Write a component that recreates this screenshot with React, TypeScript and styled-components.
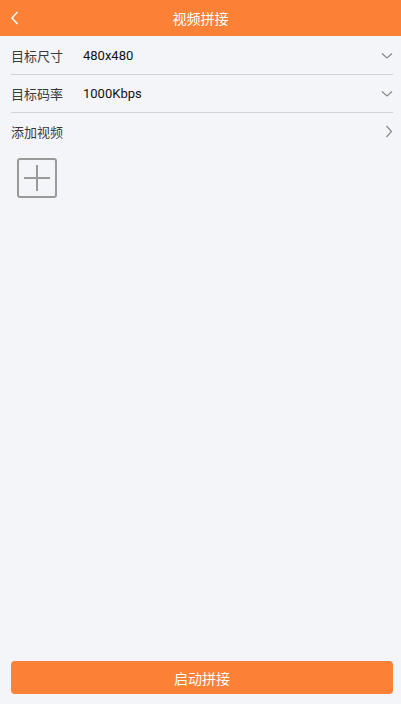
import React from 'react'
import styled, { createGlobalStyle } from 'styled-components'

const GlobalStyle = createGlobalStyle`
  html, body {
    margin: 0;
    padding: 0;
    background: #f4f5f9;
    font-family: Roboto, "Noto Sans CJK SC", sans-serif;
  }
  #root {
    height: 704px;
  }
`

const Page = styled.div`
  display: flex;
  flex-direction: column;
  height: 704px;
  background: #f4f5f9;
`

const Header = styled.header`
  position: relative;
  display: flex;
  align-items: center;
  justify-content: center;
  height: 36px;
  background: #fa8135;
  color: #fff;
`

const BackButton = styled.button`
  position: absolute;
  left: 10px;
  top: 10px;
  display: flex;
  padding: 0;
  border: 0;
  background: none;
`

const Title = styled.h1`
  margin: 0;
  font-size: 14px;
  font-weight: 400;
  font-family: "Noto Sans CJK SC", sans-serif;
`

const Content = styled.main`
  flex: 1;
  padding: 1px 8px 0 11px;
`

const Row = styled.div<{ $divider?: boolean }>`
  display: flex;
  align-items: center;
  height: 37px;
  border-bottom: ${(p) => (p.$divider ? '1px solid #d4d4d8' : 'none')};
  font-size: 13px;
`

const Label = styled.span`
  width: 72px;
  font-family: "Noto Sans CJK SC", sans-serif;
  color: #3a3a3a;
`

const Value = styled.span`
  flex: 1;
  font-family: Roboto, sans-serif;
  color: #111;
`

const Spacer = styled.span`
  flex: 1;
`

const AddBox = styled.button`
  display: flex;
  align-items: center;
  justify-content: center;
  width: 40px;
  height: 40px;
  margin: 8px 0 0 6px;
  padding: 0;
  border: 2px solid #9a9a9a;
  border-radius: 3px;
  background: transparent;
  box-sizing: border-box;
`

const Footer = styled.footer`
  padding: 0 8px 10px 11px;
`

const StartButton = styled.button`
  width: 100%;
  height: 33px;
  border: 0;
  border-radius: 4px;
  background: #fa8135;
  color: #fff;
  font-size: 14px;
  font-family: "Noto Sans CJK SC", sans-serif;
`

const ChevronDown = () => (
  <svg width="12" height="8" viewBox="0 0 12 8">
    <path d="M1 1.5 L6 6 L11 1.5" fill="none" stroke="#888" strokeWidth="1.2" />
  </svg>
)

const ChevronRight = () => (
  <svg width="8" height="13" viewBox="0 0 8 13">
    <path d="M1.5 1 L6.5 6.5 L1.5 12" fill="none" stroke="#888" strokeWidth="1.2" />
  </svg>
)

export default function App() {
  return (
    <>
      <GlobalStyle />
      <Page>
        <Header>
          <BackButton aria-label="返回">
            <svg width="10" height="16" viewBox="0 0 10 16">
              <path d="M7.5 2 L2 8 L7.5 14" fill="none" stroke="#fff" strokeWidth="1.5" />
            </svg>
          </BackButton>
          <Title>视频拼接</Title>
        </Header>
        <Content>
          <Row $divider>
            <Label>目标尺寸</Label>
            <Value>480x480</Value>
            <ChevronDown />
          </Row>
          <Row $divider>
            <Label>目标码率</Label>
            <Value>1000Kbps</Value>
            <ChevronDown />
          </Row>
          <Row>
            <Label>添加视频</Label>
            <Spacer />
            <ChevronRight />
          </Row>
          <AddBox aria-label="添加">
            <svg width="28" height="28" viewBox="0 0 28 28">
              <path d="M14 1 V27 M1 14 H27" stroke="#9a9a9a" strokeWidth="2" />
            </svg>
          </AddBox>
        </Content>
        <Footer>
          <StartButton>启动拼接</StartButton>
        </Footer>
      </Page>
    </>
  )
}
